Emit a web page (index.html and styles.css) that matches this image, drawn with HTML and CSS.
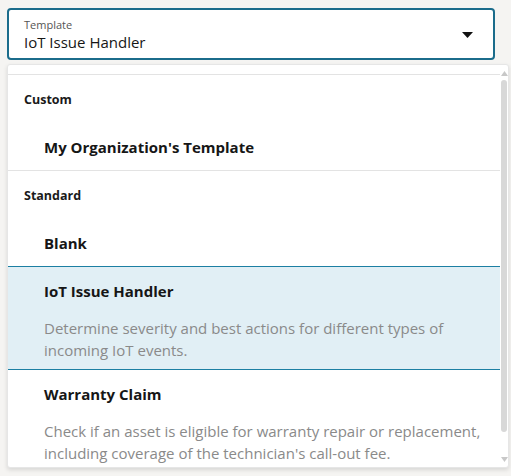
FILE: index.html
```html
<!DOCTYPE html>
<html>
<head>
<meta charset="utf-8">
<link rel="stylesheet" href="styles.css">
</head>
<body>
<div class="page">
  <div class="select">
    <div class="select-text">
      <div class="select-label">Template</div>
      <div class="select-value">IoT Issue Handler</div>
    </div>
    <svg class="caret" width="11" height="6" viewBox="0 0 11 6"><path d="M0 0 H11 L5.5 6 Z" fill="#111"/></svg>
  </div>
  <div class="dropdown">
    <div class="list">
      <div class="spacer"></div>
      <div class="group-header">Custom</div>
      <div class="item"><div class="item-title">My Organization's Template</div></div>
      <div class="group-header group-sep">Standard</div>
      <div class="item"><div class="item-title">Blank</div></div>
      <div class="item selected">
        <div class="item-title">IoT Issue Handler</div>
        <div class="item-desc">Determine severity and best actions for different types of incoming IoT events.</div>
      </div>
      <div class="item">
        <div class="item-title">Warranty Claim</div>
        <div class="item-desc">Check if an asset is eligible for warranty repair or replacement, including coverage of the technician's call-out fee.</div>
      </div>
    </div>
    <div class="scrollbar">
      <svg class="arrow" width="7" height="5" viewBox="0 0 7 5"><path d="M3.5 0 L7 5 H0 Z" fill="#c8c8c8"/></svg>
      <div class="thumb"></div>
      <svg class="arrow arrow-down" width="7" height="5" viewBox="0 0 7 5"><path d="M0 0 H7 L3.5 5 Z" fill="#c8c8c8"/></svg>
    </div>
  </div>
</div>
</body>
</html>
```
FILE: styles.css
```css
html, body {
  margin: 0;
  padding: 0;
  background: #f5f4f2;
  height: 100%;
  overflow: hidden;
}
body {
  font-family: "Open Sans", "Noto Sans", sans-serif;
  color: #1a1a1a;
}
.page {
  padding: 8px 1px 0 7px;
  display: flex;
  flex-direction: column;
  gap: 4px;
}
.select {
  width: 488px;
  height: 52px;
  box-sizing: border-box;
  border: 2px solid #1b6c8b;
  border-radius: 4px;
  background: #fff;
  display: flex;
  align-items: center;
  padding: 0 20px 0 15px;
}
.select-text {
  flex: 1;
  display: flex;
  flex-direction: column;
  padding-top: 2px;
}
.select-label {
  font-size: 11px;
  line-height: 14px;
  color: #555;
}
.select-value {
  font-size: 15px;
  line-height: 20px;
  color: #161616;
}
.caret {
  margin-top: 2px;
}
.dropdown {
  width: 502px;
  height: 404px;
  box-sizing: border-box;
  background: #fff;
  border: 1px solid #e6e6e6;
  border-radius: 3px;
  box-shadow: 0 2px 4px rgba(0,0,0,0.12);
  display: flex;
  overflow: hidden;
}
.list {
  flex: 1;
  overflow: hidden;
}
.spacer {
  height: 9px;
  border-bottom: 1px solid #e3e3e3;
}
.group-header {
  font-size: 12.5px;
  font-weight: 700;
  line-height: 22px;
  padding: 14px 16px 12px;
}
.group-sep {
  border-top: 1px solid #e3e3e3;
}
.item {
  padding: 12px 16px 11px 36px;
}
.item-title {
  font-size: 15px;
  font-weight: 700;
  line-height: 24px;
  color: #161616;
}
.item-desc {
  margin-top: 14px;
  margin-bottom: -3px;
  font-size: 15px;
  line-height: 22px;
  color: #8a8a8a;
}
.selected {
  background: #e1eff5;
  border-top: 1px solid #1c7fa3;
  border-bottom: 1px solid #1c7fa3;
}
.scrollbar {
  width: 8px;
  display: flex;
  flex-direction: column;
  align-items: center;
  padding: 6px 0 5px;
  gap: 4px;
}
.thumb {
  width: 6px;
  height: 352px;
  background: #d8d8d8;
  border-radius: 3px;
}
.arrow {
  flex: none;
}
.arrow-down {
  margin-top: auto;
}
```
